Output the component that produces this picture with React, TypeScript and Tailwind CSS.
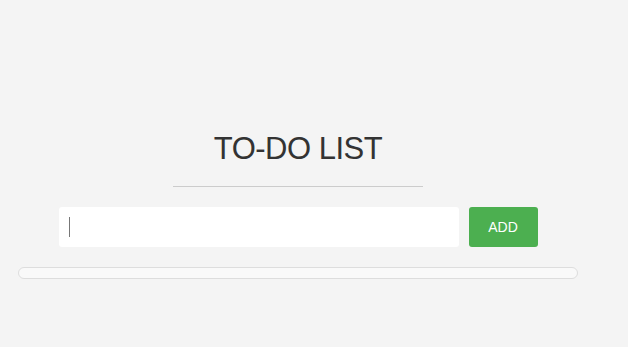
import React, { useState } from "react";

// シンプルなTodoリスト画面
const App: React.FC = () => {
    const [text, setText] = useState("");
    const [todos, setTodos] = useState<string[]>([]);

    const addTodo = () => {
        if (!text.trim()) return;
        setTodos([...todos, text.trim()]);
        setText("");
    };

    return (
        <div
            className="min-h-[347px] w-full bg-[#f4f4f4] pt-[133px]"
            style={{ fontFamily: '"Liberation Sans", Arial, sans-serif' }}
        >
            <div className="ml-[18px] flex w-[560px] flex-col items-center">
                <h1 className="text-[31px] leading-none font-normal tracking-[-0.5px] text-[#333]">TO-DO LIST</h1>
                <div className="mt-[22px] h-px w-[250px] bg-[#cccccc]" />

                {/* 入力フォーム */}
                <div className="mt-[20px] flex gap-[10px]">
                    <div className="relative h-[40px] w-[400px]">
                        <input
                            value={text}
                            onChange={(e) => setText(e.target.value)}
                            onKeyDown={(e) => e.key === "Enter" && addTodo()}
                            className="h-full w-full rounded-[3px] bg-white px-[10px] text-sm text-[#333] caret-transparent outline-none"
                        />
                        {text === "" && (
                            <span className="pointer-events-none absolute left-[10px] top-[10px] h-[20px] w-px bg-[#777]" />
                        )}
                    </div>
                    <button
                        onClick={addTodo}
                        className="h-[40px] w-[69px] rounded-[3px] bg-[#4caf50] text-sm text-white"
                    >
                        ADD
                    </button>
                </div>

                {/* リスト */}
                <ul className="mt-[20px] min-h-[12px] w-full rounded-full border border-[#dddddd] bg-[#f9f9f9]">
                    {todos.map((todo, i) => (
                        <li key={i} className="px-4 py-2 text-sm text-[#333]">
                            {todo}
                        </li>
                    ))}
                </ul>
            </div>
        </div>
    );
};

export default App;
